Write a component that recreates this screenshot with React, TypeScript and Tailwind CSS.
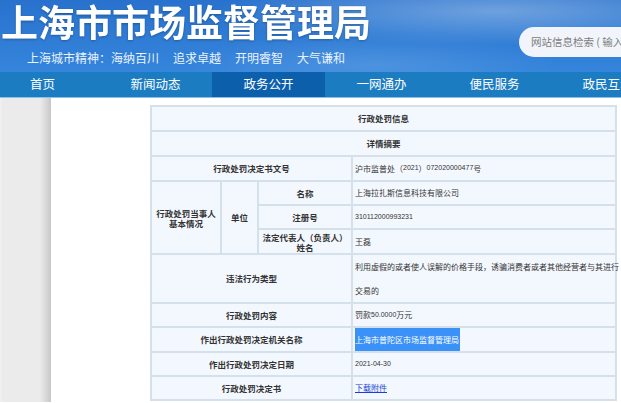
import React from "react";

const navItems = ["首页", "新闻动态", "政务公开", "一网通办", "便民服务", "政民互动"];

const cell = "bg-[#f3f8fe] flex items-center";
const label = `${cell} justify-center text-center font-bold text-[8.5px] text-[#333]`;
const value = `${cell} pl-[2px] text-[8px] text-[#333] whitespace-nowrap`;
const num = "font-['Liberation_Sans'] text-[7px]";

export default function App() {
  return (
    <div className="w-[621px] h-[403px] overflow-hidden bg-white font-['Noto_Sans_CJK_SC',sans-serif]">
      {/* Banner */}
      <header className="h-[72px] flex overflow-hidden bg-[radial-gradient(ellipse_at_80%_15%,rgba(255,255,255,0.32),transparent_40%),radial-gradient(ellipse_at_60%_90%,rgba(255,255,255,0.12),transparent_35%),linear-gradient(to_bottom,#2872cd,#3585dc)]">
        <div className="w-[519px] shrink-0 flex flex-col">
          <h1 className="mt-[1px] ml-[1px] text-[37px] leading-[40px] font-bold text-white whitespace-nowrap drop-shadow-[0_1px_1px_rgba(0,0,0,0.25)]">
            上海市市场监督管理局
          </h1>
          <div className="mt-[9px] ml-[27px] flex gap-[14px] text-[12px] leading-[16px] text-[#eaf3fd] whitespace-nowrap">
            <span>上海城市精神：海纳百川</span>
            <span>追求卓越</span>
            <span>开明睿智</span>
            <span>大气谦和</span>
          </div>
        </div>
        <div className="mt-[27px] h-[30px] w-[140px] shrink-0 rounded-full bg-[#f1f5fb] flex items-center pl-[12px] text-[10.5px] text-[#7d7d7d] whitespace-nowrap">
          网站信息检索 ( 输入关键字 )
        </div>
      </header>

      {/* Nav */}
      <nav className="h-[26px] bg-[#1b7cc1] border-b border-[#8cc0e6] overflow-hidden flex">
        <div className="flex -ml-[14px]">
          {navItems.map((n) => (
            <div
              key={n}
              className={`w-[113px] shrink-0 flex items-center justify-center text-[12.5px] text-white ${
                n === "政务公开" ? "bg-[#0c5fab]" : ""
              }`}
            >
              {n}
            </div>
          ))}
        </div>
      </nav>

      {/* Body */}
      <div className="flex h-[305px]">
        <div className="w-[51px] shrink-0 h-[304px] bg-[linear-gradient(to_right,#f2f2f2_0px,#ebebeb_2px,#ebebeb_40px,#d2d2d2_48px,#c6c6c6_51px)]" />
        <div className="ml-[99px] mt-[7px] w-[467px] self-start">
          <div className="grid grid-cols-[68px_35px_92px_262px] grid-rows-[23px_23px_23px_22px_22px_23px_47px_22px_23px_22px_22px] gap-[2px] p-[2px] bg-[#d4e0ea]">
            <div className={`${label} col-span-4`}>行政处罚信息</div>
            <div className={`${label} col-span-4`}>详情摘要</div>

            <div className={`${label} col-span-3`}>行政处罚决定书文号</div>
            <div className={value}>
              沪市监普处（<span className={num}>2021</span>）<span className={num}>072020000477</span>号
            </div>

            <div className={`${label} row-span-3 leading-[10px]`}>
              行政处罚当事人
              <br />
              基本情况
            </div>
            <div className={`${label} row-span-3`}>单位</div>
            <div className={label}>名称</div>
            <div className={value}>上海拉扎斯信息科技有限公司</div>
            <div className={label}>注册号</div>
            <div className={value}>
              <span className={num}>310112000993231</span>
            </div>
            <div className={`${label} leading-[10px]`}>
              法定代表人（负责人）
              <br />
              姓名
            </div>
            <div className={value}>王磊</div>

            <div className={`${label} col-span-3`}>违法行为类型</div>
            <div className={`${value} items-start leading-[24px] text-[7.9px]`}>
              <div>
                利用虚假的或者使人误解的价格手段，诱骗消费者或者其他经营者与其进行
                <br />
                交易的
              </div>
            </div>

            <div className={`${label} col-span-3`}>行政处罚内容</div>
            <div className={value}>
              罚款<span className={num}>50.0000</span>万元
            </div>

            <div className={`${label} col-span-3`}>作出行政处罚决定机关名称</div>
            <div className={`${value} items-stretch`}>
              <span className="flex items-center bg-[#3a91f7] text-white pr-[1px]">
                上海市普陀区市场监督管理局
              </span>
            </div>

            <div className={`${label} col-span-3`}>作出行政处罚决定日期</div>
            <div className={value}>
              <span className={num}>2021-04-30</span>
            </div>

            <div className={`${label} col-span-3`}>行政处罚决定书</div>
            <div className={value}>
              <a className="text-[#1a3fd8] underline" href="#">
                下载附件
              </a>
            </div>
          </div>
        </div>
      </div>
    </div>
  );
}
